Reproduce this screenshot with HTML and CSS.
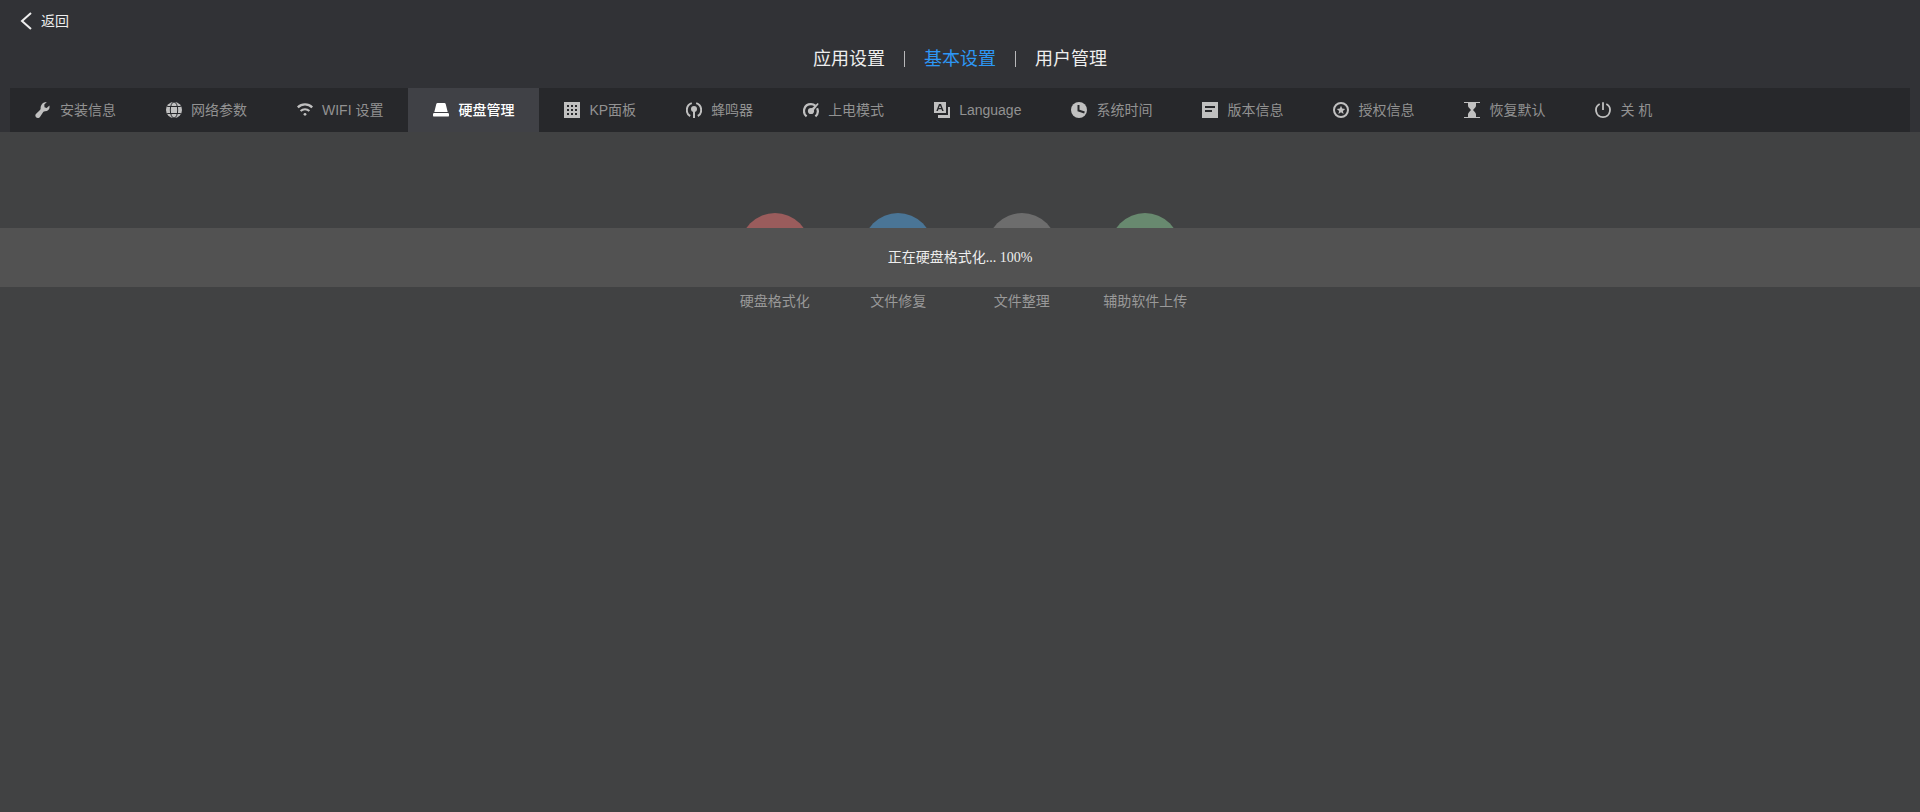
FILE: index.html
```html
<!DOCTYPE html>
<html lang="zh-CN">
<head>
<meta charset="utf-8">
<title>硬盘管理</title>
<link rel="stylesheet" href="styles.css">
</head>
<body>
<header class="header">
  <a class="back" href="#">
    <svg class="back-icon" viewBox="0 0 12 18" aria-hidden="true"><path d="M11 1 2 9l9 8" fill="none" stroke="currentColor" stroke-width="2"/></svg>
    返回
  </a>
  <nav class="sections">
    <a class="section" href="#">应用设置</a>
    <a class="section section-active" href="#">基本设置</a>
    <a class="section" href="#">用户管理</a>
  </nav>
  <nav class="tabs">
    <a class="tab" href="#"><svg class="icon" viewBox="0 0 16 16" aria-hidden="true"><path d="M11.800 0 9.300 2.600 9.500 5.200 11.700 6 14.400 3.600C15.200 6.500 13.300 9.300 10 9.300L8.400 9.800 5.300 14.400C4.200 16.200 2.200 16.400 1 15.200S.3 12.200 1.700 11.200L5 8c.6-.6.700-1.200.6-2C5.700 2.600 8.200-.1 11.800 0z"/></svg>安装信息</a>
    <a class="tab" href="#"><svg class="icon" viewBox="0 0 16 16" aria-hidden="true"><circle cx="8" cy="8" r="8"/><g class="cut"><ellipse cx="8" cy="8" rx="3.700" ry="8"/><path d="M1.200 4.500h13.600M1.200 11.500h13.600"/></g></svg>网络参数</a>
    <a class="tab" href="#"><svg class="icon" viewBox="0 0 16 16" aria-hidden="true"><g class="line"><path d="M.8 5.400C4.800 1.400 11.200 1.400 15.200 5.400" stroke-width="2.300"/><path d="M3.600 9C6.100 6.600 9.900 6.600 12.400 9" stroke-width="2"/></g><circle cx="8" cy="12.300" r="1.400"/></svg>WIFI 设置</a>
    <a class="tab tab-active" href="#" aria-current="page"><svg class="icon" viewBox="0 0 16 16" aria-hidden="true"><path d="M4.600 1h6.800q1 0 1.300 1L14.700 9.900H1.300L3.300 2q.3-1 1.300-1zM1.200 11h13.600q1.200 0 1.200 1.200v1.200q0 1.200-1.200 1.200H1.200Q0 14.600 0 13.400v-1.200Q0 11 1.200 11z"/></svg>硬盘管理</a>
    <a class="tab" href="#"><svg class="icon" viewBox="0 0 16 16" aria-hidden="true"><path fill-rule="evenodd" d="M0 0h16v16H0zM3 3v2h2V3zM7 3v2h2V3zM11 3v2h2V3zM3 7v2h2V7zM7 7v2h2V7zM11 7v2h2V7zM3 11v2h2v-2zM7 11v2h2v-2zM11 11v2h2v-2z"/></svg>KP面板</a>
    <a class="tab" href="#"><svg class="icon" viewBox="0 0 16 16" aria-hidden="true"><path class="line" stroke-width="2" d="M5.800 1.100C-.4 3-.6 11.400 4.200 14M10.200 1.100C16.400 3 16.600 11.400 11.800 14"/><circle cx="8" cy="7" r="3"/><path d="M7 7h2v9H7z"/></svg>蜂鸣器</a>
    <a class="tab" href="#"><svg class="icon" viewBox="0 0 16 16" aria-hidden="true"><path class="line" stroke-width="2.200" d="M3.600 14.400C-1 10.600.7 2.200 8 2.200c1.700 0 3.100.5 4.200 1.400M14.100 6.200c1.400 3.100.6 6.200-1.700 8.200"/><circle cx="8" cy="9" r="3.100"/><path d="M8 7 14.700.9l1 1L10 9.200z"/></svg>上电模式</a>
    <a class="tab" href="#"><svg class="icon" viewBox="0 0 16 16" aria-hidden="true"><path fill-rule="evenodd" d="M0 0h12v11H0zM5 2 2.300 9h1.600l.6-1.700h3L8.100 9h1.600L7 2zM6 3.500 7.100 6.100H4.900z"/><path d="M14 5h2v11H4v-3h10z"/></svg>Language</a>
    <a class="tab" href="#"><svg class="icon" viewBox="0 0 16 16" aria-hidden="true"><circle cx="8" cy="8" r="8"/><path class="cut hands" d="M7.500 3v5.500L13.500 10.500"/></svg>系统时间</a>
    <a class="tab" href="#"><svg class="icon" viewBox="0 0 16 16" aria-hidden="true"><path fill-rule="evenodd" d="M0 0h16v16H0zM3 4v2h10V4zM3 8v2h7V8z"/></svg>版本信息</a>
    <a class="tab" href="#"><svg class="icon" viewBox="0 0 16 16" aria-hidden="true"><circle class="line" cx="8" cy="8" r="7" stroke-width="2"/><path d="m8 3.800 1.200 2.800 3 .3-2.300 2 .7 3L8 10.300l-2.600 1.600.7-3-2.300-2 3-.3z"/></svg>授权信息</a>
    <a class="tab" href="#"><svg class="icon" viewBox="0 0 16 16" aria-hidden="true"><path d="M0 0h16v1H0zM0 15h16v1H0zM4 1h8v2.500Q12 5 10.800 6L9 8l1.800 2q1.200 1 1.200 2.500V15H4v-2.500Q4 11 5.200 10L7 8 5.200 6Q4 5 4 3.500z"/></svg>恢复默认</a>
    <a class="tab" href="#"><svg class="icon" viewBox="0 0 16 16" aria-hidden="true"><path class="line" stroke-width="1.800" d="M4.700 2C-1.300 5 .3 15.100 8 15.100S17.300 5 11.300 2M8 .3v7.700"/></svg>关 机</a>
  </nav>
</header>
<main class="content">
  <div class="actions">
    <button class="action" type="button"><span class="disc disc-red"></span>硬盘格式化</button>
    <button class="action" type="button"><span class="disc disc-blue"></span>文件修复</button>
    <button class="action" type="button"><span class="disc disc-gray"></span>文件整理</button>
    <button class="action" type="button"><span class="disc disc-green"></span>辅助软件上传</button>
  </div>
  <div class="progress" role="status">正在硬盘格式化... 100%</div>
</main>
</body>
</html>
```
FILE: styles.css
```css
* {
  box-sizing: border-box;
}

body {
  margin: 0;
  min-height: 100vh;
  display: flex;
  flex-direction: column;
  background: #414243;
  color: #eeeeee;
  font: 14px/20px "Liberation Sans", "Noto Sans CJK SC", sans-serif;
}

a {
  color: inherit;
  text-decoration: none;
}

.header {
  background: #313236;
  padding: 11px 10px 0;
}

.back {
  display: flex;
  align-items: center;
  gap: 9px;
  width: fit-content;
  height: 20px;
  padding-left: 10px;
}

.back-icon {
  width: 12px;
  height: 18px;
}

.sections {
  display: flex;
  justify-content: center;
  padding: 16px 0 17px;
  font-size: 18px;
  line-height: 24px;
}

.section {
  display: flex;
  align-items: center;
  padding: 0 19px;
}

.section + .section::before {
  content: "";
  width: 1px;
  height: 16px;
  margin: 0 19px 0 -19px;
  background: #b8b8ba;
}

.section-active {
  color: #2d97f5;
}

.tabs {
  display: flex;
  height: 44px;
  background: #27282b;
  color: #929292;
}

.tab {
  display: flex;
  align-items: center;
  gap: 9px;
  padding: 0 25px;
  white-space: nowrap;
}

.tab-active {
  background: #404146;
  color: #ffffff;
  font-weight: 500;
}

.icon {
  width: 16px;
  height: 16px;
  flex: none;
  fill: #c0c0c0;
}

.tab-active .icon {
  fill: #ffffff;
}

.icon .line {
  fill: none;
  stroke: #c0c0c0;
}

.icon .cut {
  fill: none;
  stroke: #27282b;
  stroke-width: 1;
}

.icon .hands {
  stroke-width: 2;
}

.content {
  position: relative;
  flex: 1;
  padding: 81px 10px 0;
}

.actions {
  display: grid;
  grid-template-columns: repeat(4, 1fr);
  width: 26%;
  min-width: 400px;
  margin: 0 auto;
}

.action {
  display: flex;
  flex-direction: column;
  align-items: center;
  gap: 8px;
  padding: 0;
  border: 0;
  background: none;
  color: #999999;
  font: inherit;
  white-space: nowrap;
}

.disc {
  width: 70px;
  height: 70px;
  border-radius: 50%;
}

.disc-red {
  background: #9a5c5c;
}

.disc-blue {
  background: #4a7596;
}

.disc-gray {
  background: #6d6d6d;
}

.disc-green {
  background: #68896f;
}

.progress {
  position: absolute;
  top: 96px;
  left: 0;
  right: 0;
  padding: 20px;
  background: #525252;
  font-family: "Liberation Serif", "Noto Sans CJK SC", serif;
  line-height: 19px;
  text-align: center;
}
```
